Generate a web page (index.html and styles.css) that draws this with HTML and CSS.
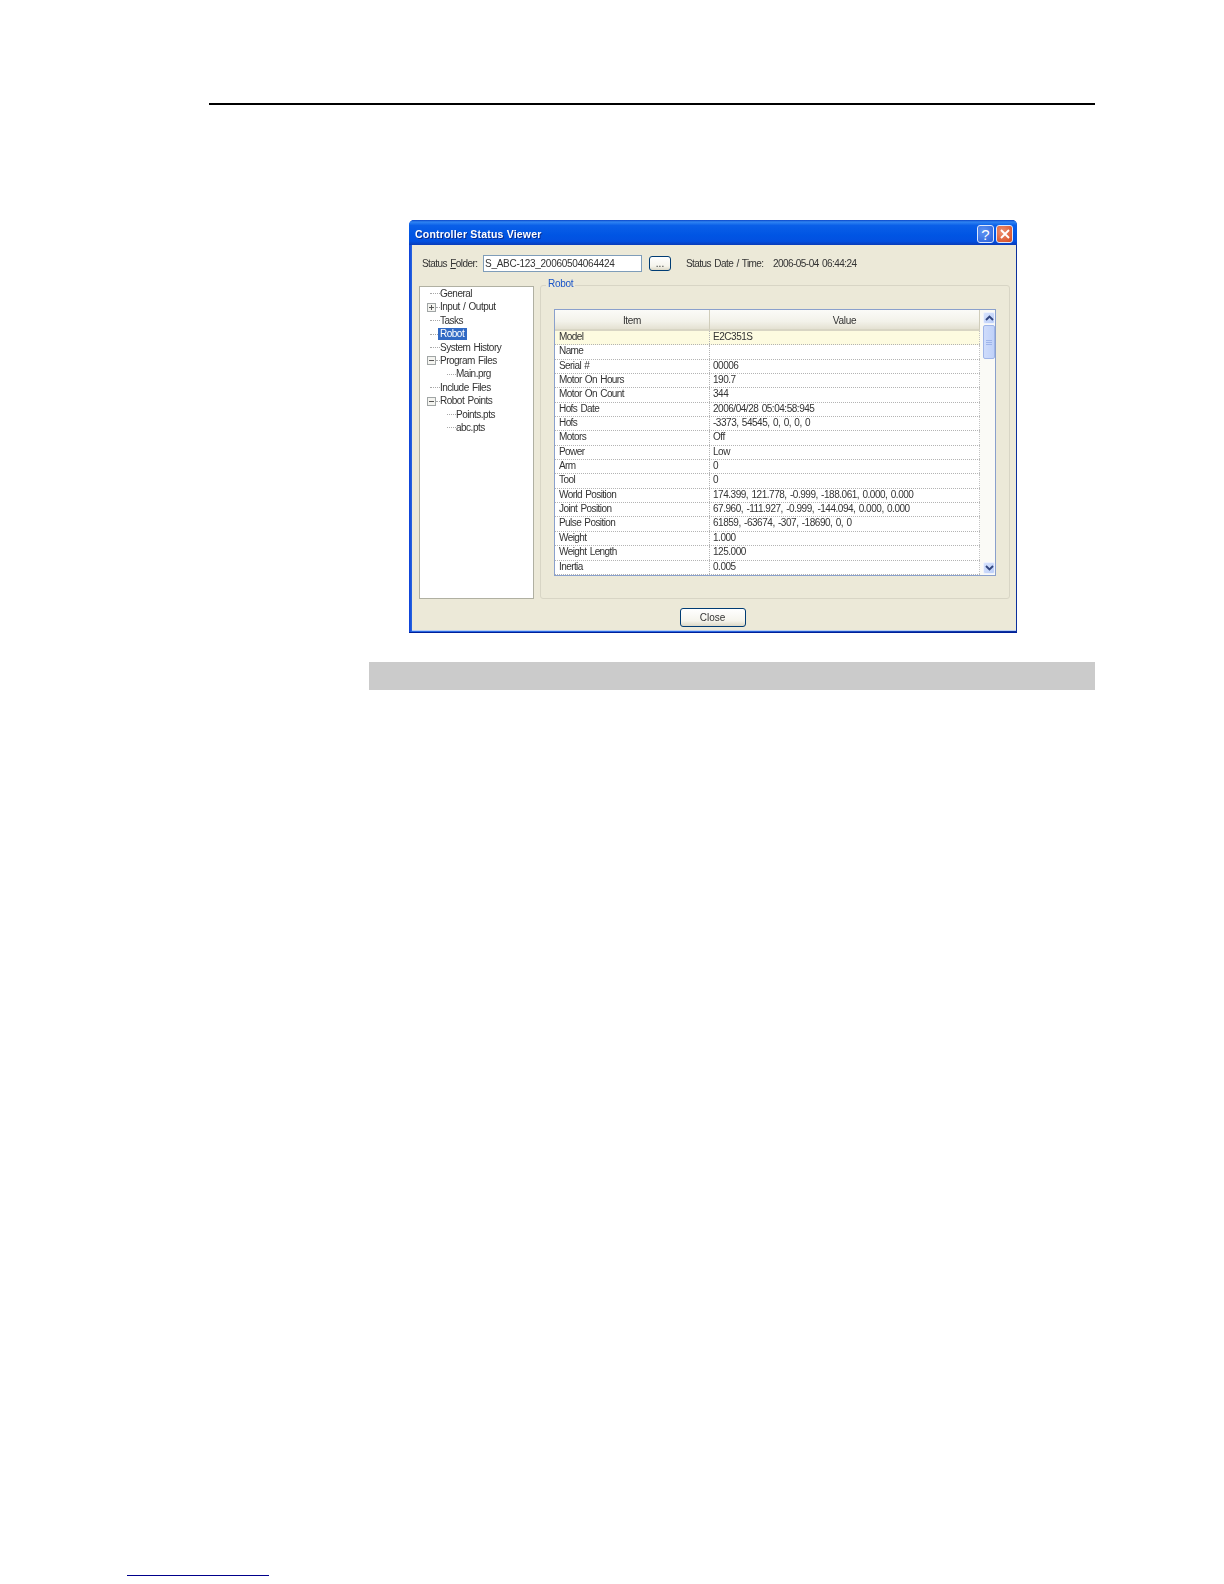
FILE: index.html
```html
<!DOCTYPE html>
<html lang="en">
<head>
<meta charset="utf-8">
<title>Controller Status Viewer</title>
<link rel="stylesheet" href="styles.css">
</head>
<body>
<div class="page">
  <div class="top-rule"></div>
  <section class="dialog">
    <header class="titlebar">
      <span class="title">Controller Status Viewer</span>
      <span class="win-btn help">?</span>
      <span class="win-btn close">
        <svg viewBox="0 0 12 12" width="12" height="12"><path d="M2 2L10 10M10 2L2 10" stroke="#fff" stroke-width="1.9" fill="none"/></svg>
      </span>
    </header>
    <div class="client">
      <div class="folder-row">
        <label class="folder-label">Status <u>F</u>older:</label>
        <div class="folder-input">S_ABC-123_20060504064424</div>
        <button class="xp-btn browse">...</button>
        <span class="date-label">Status Date / Time:</span>
        <span class="date-value">2006-05-04 06:44:24</span>
      </div>
      <div class="main-row">
        <nav class="tree">
          <div class="node"><span class="spacer"></span><span class="dash"></span><span class="name">General</span></div>
          <div class="node"><svg class="exp" viewBox="0 0 9 9"><rect x=".5" y=".5" width="8" height="8" fill="#f4f4f0" stroke="#a0a5a5"/><path d="M2 4.5H7M4.5 2V7" stroke="#555"/></svg><span class="dash short"></span><span class="name">Input / Output</span></div>
          <div class="node"><span class="spacer"></span><span class="dash"></span><span class="name">Tasks</span></div>
          <div class="node"><span class="spacer"></span><span class="dash"></span><span class="name selected">Robot</span></div>
          <div class="node"><span class="spacer"></span><span class="dash"></span><span class="name">System History</span></div>
          <div class="node"><svg class="exp" viewBox="0 0 9 9"><rect x=".5" y=".5" width="8" height="8" fill="#f4f4f0" stroke="#a0a5a5"/><path d="M2 4.5H7" stroke="#555"/></svg><span class="dash short"></span><span class="name">Program Files</span></div>
          <div class="node child"><span class="dash"></span><span class="name">Main.prg</span></div>
          <div class="node"><span class="spacer"></span><span class="dash"></span><span class="name">Include Files</span></div>
          <div class="node"><svg class="exp" viewBox="0 0 9 9"><rect x=".5" y=".5" width="8" height="8" fill="#f4f4f0" stroke="#a0a5a5"/><path d="M2 4.5H7" stroke="#555"/></svg><span class="dash short"></span><span class="name">Robot Points</span></div>
          <div class="node child"><span class="dash"></span><span class="name">Points.pts</span></div>
          <div class="node child"><span class="dash"></span><span class="name">abc.pts</span></div>
        </nav>
        <div class="group">
          <span class="legend">Robot</span>
          <div class="grid-frame">
            <div class="grid-scroll">
              <div class="grid-head"><div class="head-cell item">Item</div><div class="head-cell value">Value</div></div>
              <div class="grid-row current"><div class="c1">Model</div><div class="c2">E2C351S</div></div>
              <div class="grid-row"><div class="c1">Name</div><div class="c2"></div></div>
              <div class="grid-row"><div class="c1">Serial #</div><div class="c2">00006</div></div>
              <div class="grid-row"><div class="c1">Motor On Hours</div><div class="c2">190.7</div></div>
              <div class="grid-row"><div class="c1">Motor On Count</div><div class="c2">344</div></div>
              <div class="grid-row"><div class="c1">Hofs Date</div><div class="c2">2006/04/28 05:04:58:945</div></div>
              <div class="grid-row"><div class="c1">Hofs</div><div class="c2">-3373, 54545, 0, 0, 0, 0</div></div>
              <div class="grid-row"><div class="c1">Motors</div><div class="c2">Off</div></div>
              <div class="grid-row"><div class="c1">Power</div><div class="c2">Low</div></div>
              <div class="grid-row"><div class="c1">Arm</div><div class="c2">0</div></div>
              <div class="grid-row"><div class="c1">Tool</div><div class="c2">0</div></div>
              <div class="grid-row"><div class="c1">World Position</div><div class="c2">174.399, 121.778, -0.999, -188.061, 0.000, 0.000</div></div>
              <div class="grid-row"><div class="c1">Joint Position</div><div class="c2">67.960, -111.927, -0.999, -144.094, 0.000, 0.000</div></div>
              <div class="grid-row"><div class="c1">Pulse Position</div><div class="c2">61859, -63674, -307, -18690, 0, 0</div></div>
              <div class="grid-row"><div class="c1">Weight</div><div class="c2">1.000</div></div>
              <div class="grid-row"><div class="c1">Weight Length</div><div class="c2">125.000</div></div>
              <div class="grid-row"><div class="c1">Inertia</div><div class="c2">0.005</div></div>
            </div>
            <div class="scrollbar">
              <div class="sb-btn"><svg viewBox="0 0 9 6" width="9" height="6"><path d="M1 5L4.5 1.5L8 5" stroke="#33477f" stroke-width="1.9" fill="none"/></svg></div>
              <div class="sb-thumb"><span></span><span></span><span></span></div>
              <div class="sb-track"></div>
              <div class="sb-btn"><svg viewBox="0 0 9 6" width="9" height="6"><path d="M1 1L4.5 4.5L8 1" stroke="#33477f" stroke-width="1.9" fill="none"/></svg></div>
            </div>
          </div>
        </div>
      </div>
      <div class="footer-row"><button class="xp-btn close-btn">Close</button></div>
    </div>
  </section>
  <div class="note-bar"></div>
  <div class="foot-link"></div>
</div>
</body>
</html>
```
FILE: styles.css
```css
* { box-sizing: border-box; }
html, body { margin: 0; padding: 0; background: #fff; }
body { font-family: "Liberation Sans", Arial, sans-serif; font-size: 10px; color: #333; word-spacing: 1px; }
.page { width: 1224px; height: 1584px; padding-top: 103px; display: flex; flex-direction: column; overflow: hidden; }
.top-rule { width: 886px; height: 2px; margin-left: 209px; background: #000; flex: none; }
.dialog { width: 608px; height: 413px; margin: 115px 0 0 409px; flex: none; display: flex; flex-direction: column; background: linear-gradient(90deg, #0a3ed8, #2a68e0 3px, #2a68e0 50%, #0b2f9c 100%); border-radius: 5px 5px 0 0; padding: 0 1px 1px 3px; border-bottom: 1px solid #00209a; }
.titlebar { height: 25px; margin: 0 -1px 0 -3px; flex: none; display: flex; align-items: center; padding: 3px 4px 0 6px; gap: 2px; border-radius: 5px 5px 0 0; background: linear-gradient(#0a45c8 0%, #2f84f2 8%, #0a5fe8 22%, #0055e3 60%, #0250e0 85%, #0a3cb8 100%); }
.title { flex: 1; color: #fff; font-weight: bold; font-size: 10.5px; letter-spacing: .2px; word-spacing: 0; text-shadow: 1px 1px 0 #0a2c8c; filter: blur(.3px); }
.win-btn { width: 17px; height: 18px; flex: none; border: 1px solid #dfe8fb; border-radius: 3px; display: flex; align-items: center; justify-content: center; color: #fff; font-weight: normal; font-size: 15px; }
.help { background: radial-gradient(circle at 35% 35%, #5f95f4, #2a5fd8); }
.close { background: radial-gradient(circle at 35% 35%, #ee9070, #d4481e); }
.client { flex: 1; background: #ece9d8; display: flex; flex-direction: column; padding: 10px 6px 3px 7px; min-height: 0; border-bottom: 1px solid #b8cdf2; filter: blur(.3px); }
.folder-row { height: 17px; display: flex; align-items: center; flex: none; }
.folder-label { width: 61px; margin-left: 3px; letter-spacing: -.55px; flex: none; }
.folder-input { width: 159px; height: 17px; background: #fff; border: 1px solid #7f9db9; padding: 0 1px; line-height: 15px; letter-spacing: -.28px; flex: none; }
.xp-btn { font: inherit; color: inherit; background: linear-gradient(#fff 0%, #f5f4ec 70%, #dcd8c6 100%); border: 1px solid #003c74; border-radius: 3px; padding: 0; }
.browse { width: 22px; height: 15px; margin-left: 7px; flex: none; line-height: 10px; }
.date-label { margin-left: 15px; width: 87px; flex: none; letter-spacing: -.55px; }
.date-value { flex: none; letter-spacing: -.55px; }
.main-row { flex: 1; display: flex; gap: 6px; margin-top: 13px; min-height: 0; }
.tree { width: 115px; flex: none; margin-top: 1px; background: #fff; border: 1px solid #b0b0a2; padding-top: .3px; }
.node { height: 13.4px; display: flex; align-items: center; padding-left: 7px; white-space: nowrap; }
.node.child { padding-left: 27px; }
.exp { width: 9px; height: 9px; flex: none; }
.spacer { width: 3px; flex: none; }
.dash { width: 10px; border-top: 1px dotted #a8a8a8; flex: none; }
.dash.short { width: 4px; }
.node.child .dash { width: 9px; }
.name { padding: 0; line-height: 12px; letter-spacing: -.5px; }
.name.selected { background: #316ac5; color: #fff; margin-left: -2px; padding: 0 3px 0 2px; }
.group { flex: 1; position: relative; border: 1px solid #d8d5c5; border-radius: 3px; padding: 23px 13px 0; }
.legend { position: absolute; left: 5px; top: -8px; padding: 0 2px; background: #ece9d8; color: #1a55c8; line-height: 12px; letter-spacing: -.3px; }
.grid-frame { height: 267px; display: flex; border: 1px solid #8aa0cc; background: #fff; }
.grid-scroll { flex: 1; min-width: 0; }
.grid-head { display: flex; height: 21px; }
.head-cell { background: linear-gradient(#fbfbf8, #f3f2ea 60%, #e4e1d2); border-right: 1px solid #d0cdbb; border-bottom: 2px solid #d8d5c4; display: flex; align-items: center; justify-content: center; padding-top: 1px; letter-spacing: -.3px; }
.item { width: 155px; flex: none; }
.value { flex: 1; }
.grid-row { display: flex; height: 14.35px; border-bottom: 1px dotted #b4b4b4; line-height: 12px; }
.grid-row.current { background: #fdfbe0; }
.c1 { width: 155px; flex: none; padding-left: 4px; border-right: 1px dotted #b4b4b4; letter-spacing: -.58px; white-space: nowrap; }
.c2 { flex: 1; padding-left: 3px; border-right: 1px dotted #c4c4c4; letter-spacing: -.47px; white-space: nowrap; }
.scrollbar { width: 15px; flex: none; background: #fafaf6; display: flex; flex-direction: column; padding: 2px 0 1px 3px; }
.sb-btn { height: 12px; flex: none; display: flex; align-items: center; justify-content: center; background: linear-gradient(135deg, #d6e2fc, #bccffa); border: 1px solid #eef2fd; border-radius: 2px; }
.sb-thumb { height: 34px; margin-top: 1px; flex: none; background: linear-gradient(90deg, #cfdcfb, #bfd1f9); border: 1px solid #9fb5e8; border-radius: 2px; display: flex; flex-direction: column; align-items: center; justify-content: center; gap: 1px; }
.sb-thumb span { width: 6px; height: 1px; background: #9fb5ea; }
.sb-track { flex: 1; }
.footer-row { height: 28px; display: flex; justify-content: center; align-items: flex-end; flex: none; margin-left: -4px; }
.close-btn { width: 66px; height: 19px; }
.note-bar { width: 726px; height: 28px; margin: 29px 0 0 369px; background: #cbcbcb; flex: none; }
.foot-link { width: 142px; height: 1px; margin: auto 0 8px 127px; background: #00008b; flex: none; }
```
